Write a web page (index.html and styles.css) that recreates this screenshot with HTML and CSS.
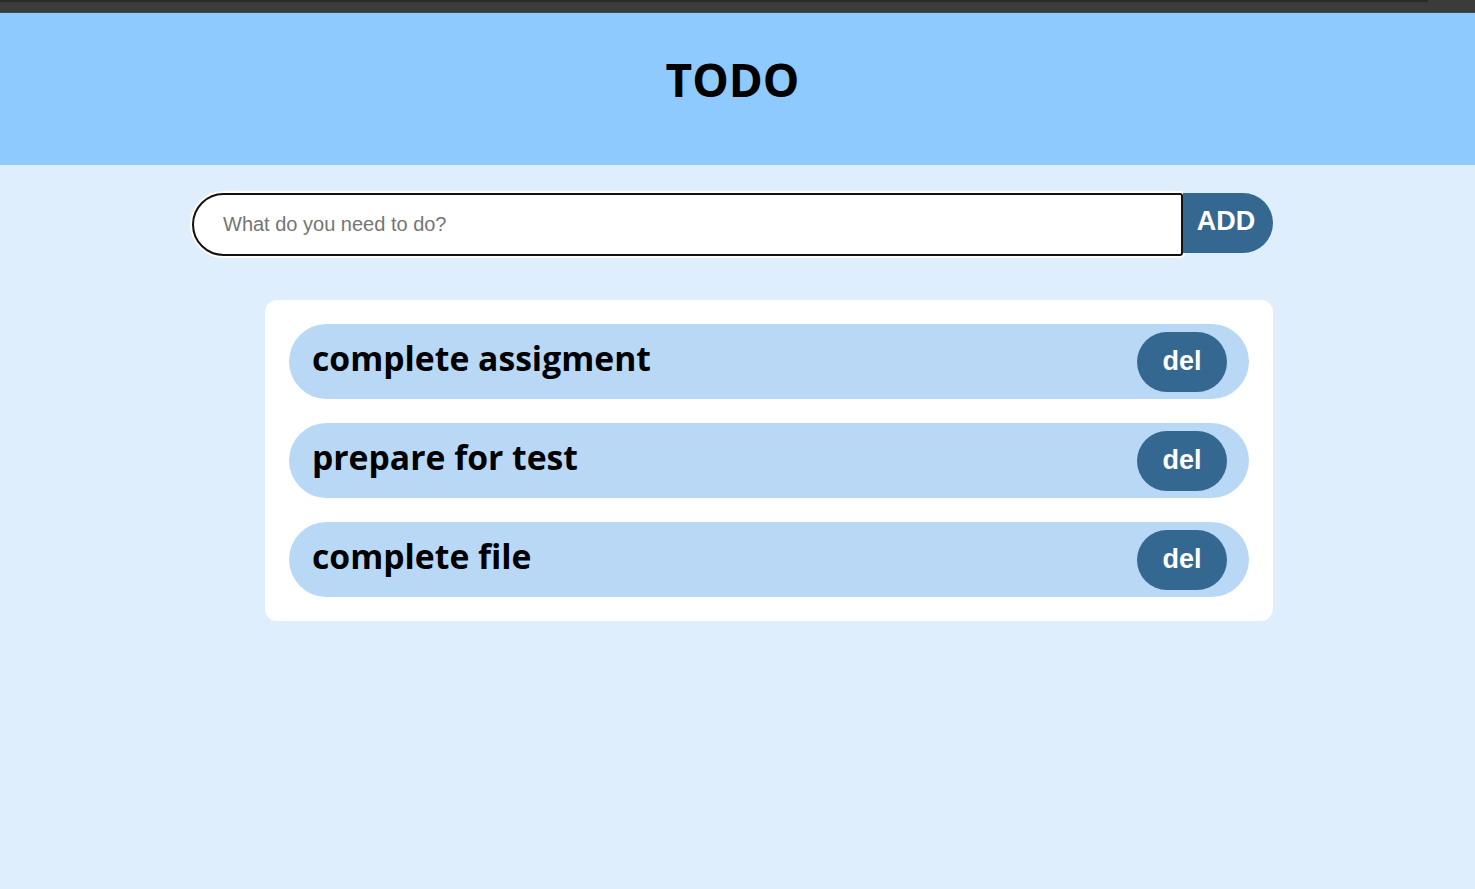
FILE: index.html
```html
<!DOCTYPE html>
<html lang="en">
<head>
<meta charset="utf-8">
<title>TODO</title>
<link rel="stylesheet" href="styles.css">
</head>
<body>
<div class="chrome"><div class="chrome-line"></div></div>
<header class="header"><h1 class="title">TODO</h1></header>
<div class="page">
<main class="main">
  <form class="add-form">
    <input class="add-input" type="text" placeholder="What do you need to do?">
    <button class="add-btn" type="button">ADD</button>
  </form>
  <ul class="list">
    <li class="item"><span class="item-text">complete assigment</span><button class="del-btn" type="button">del</button></li>
    <li class="item"><span class="item-text">prepare for test</span><button class="del-btn" type="button">del</button></li>
    <li class="item"><span class="item-text">complete file</span><button class="del-btn" type="button">del</button></li>
  </ul>
</main>
</div>
</body>
</html>
```
FILE: styles.css
```css
* { box-sizing: border-box; }
html, body { margin: 0; padding: 0; }
body {
  background: #dfeefc;
  font-family: "Open Sans", "Liberation Sans", sans-serif;
  min-height: 889px;
}
.chrome {
  height: 13px;
  background: #3b3b3b;
  border-bottom: 1px solid #4a4a4a;
}
.chrome-line {
  height: 2px;
  width: 1428px;
  background: #2a2a2a;
}
.header {
  background: #8fcaff;
  height: 152px;
  display: flex;
  justify-content: center;
  padding: 36px 10px 0 0;
}
.title {
  margin: 0;
  font-size: 46px;
  font-weight: 700;
  line-height: 60px;
  color: #000;
}
.page {
  padding-right: 10px;
}
.main {
  width: 1081px;
  margin: 0 auto;
  display: flex;
  flex-direction: column;
  align-items: flex-end;
}
.add-form {
  margin: 28px 0 0;
  display: flex;
  align-items: flex-start;
  width: 1081px;
}
.add-input {
  width: 991px;
  height: 63px;
  border: 2px solid #111;
  border-radius: 32px 3px 3px 32px;
  box-shadow: 0 0 0 2px #fff;
  padding: 0 0 0 29px;
  font-family: "Liberation Sans", Arial, sans-serif;
  font-size: 20px;
  color: #333;
  background: #fff;
  outline: none;
}
.add-input::placeholder { color: #757575; }
.add-btn {
  width: 90px;
  height: 60px;
  border: none;
  background: #356891;
  color: #fff;
  font-family: "Liberation Sans", Arial, sans-serif;
  font-weight: 700;
  font-size: 27px;
  border-radius: 0 30px 30px 0;
  padding: 0 4px 4px 0;
}
.list {
  list-style: none;
  margin: 44px 0 0;
  padding: 24px;
  width: 1008px;
  background: #fff;
  border-radius: 12px;
  display: flex;
  flex-direction: column;
  gap: 24px;
}
.item {
  height: 75px;
  background: #b8d8f6;
  border-radius: 38px;
  display: flex;
  align-items: center;
  justify-content: space-between;
  padding: 0 22px 0 23px;
}
.item-text {
  font-size: 33.7px;
  font-weight: 700;
  color: #000;
  margin-top: -7px;
}
.del-btn {
  width: 90px;
  height: 60px;
  border: none;
  border-radius: 30px;
  background: #356891;
  color: #fff;
  font-family: "Liberation Sans", Arial, sans-serif;
  font-weight: 700;
  font-size: 27px;
  padding: 0 0 1px;
}
```
